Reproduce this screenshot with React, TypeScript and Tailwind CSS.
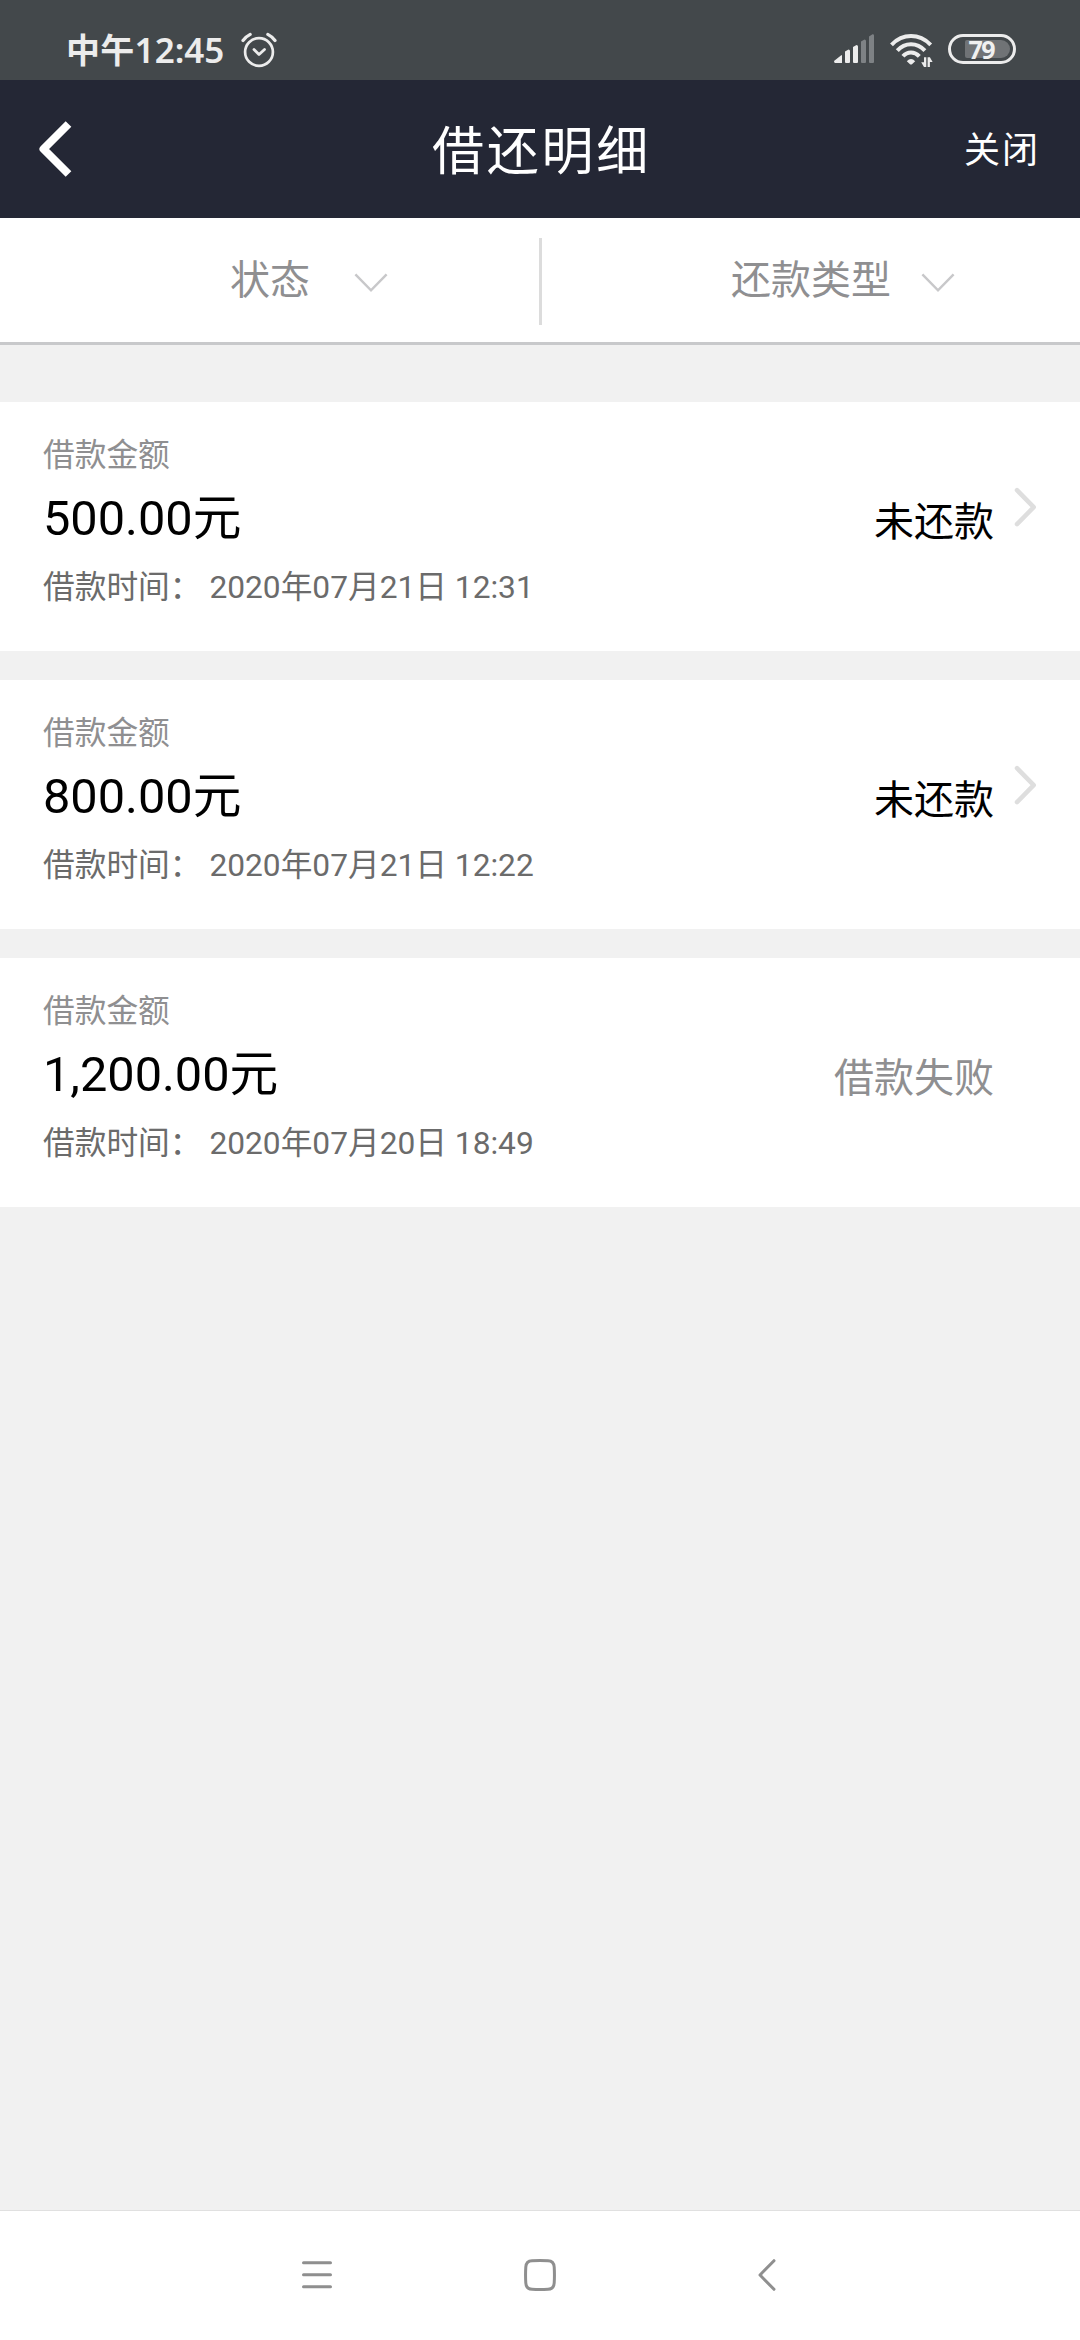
type Loan = {
  amount: string;
  time: string;
  status: string;
  open: boolean;
};

const loans: Loan[] = [
  { amount: "500.00元", time: "2020年07月21日 12:31", status: "未还款", open: true },
  { amount: "800.00元", time: "2020年07月21日 12:22", status: "未还款", open: true },
  { amount: "1,200.00元", time: "2020年07月20日 18:49", status: "借款失败", open: false },
];

function AlarmIcon() {
  return (
    <svg className="ml-[17px] mt-[32px]" width="36" height="36" viewBox="0 0 36 36" fill="none" stroke="#ececec">
      <circle cx="18" cy="20" r="13.9" strokeWidth="2.700" />
      <path d="M13 17.500l5 5 5.500-5" strokeWidth="2.800" strokeLinecap="round" strokeLinejoin="round" />
      <path d="M2 8.500Q5 4.500 9.200 2.400M34 8.500Q31 4.500 26.800 2.400" strokeWidth="3.200" strokeLinecap="round" />
    </svg>
  );
}

function SignalIcon() {
  return (
    <svg width="40" height="29" viewBox="0 0 40 29">
      <path fill="#ececec" d="M0 27l7.200-5.800h.8V29H1.200Q0 29 0 27zM11 17.500l3.500-2Q16 15.500 16 17v11q0 1-1 1h-3q-1 0-1-1zM19 13l3.500-2Q24 11 24 12.500V28q0 1-1 1h-3q-1 0-1-1z" />
      <path fill="#7e8285" d="M27 7.500l3.500-2Q32 5.500 32 7v21q0 1-1 1h-3q-1 0-1-1zM35 2.500l3.500-2.300Q40 0 40 1.500V28q0 1-1 1h-3q-1 0-1-1z" />
    </svg>
  );
}

function WifiIcon() {
  return (
    <svg className="ml-[16px]" width="43" height="34" viewBox="0 0 43 34">
      <g fill="none" stroke="#ececec" strokeWidth="4">
        <path d="M1.500 10.800Q10 2.100 21 2.100T40.700 10.800" />
        <path d="M7.300 16.700Q13 10.300 21 10.300T34.900 16.700" />
        <path d="M13 22.300Q16.200 18.400 21 18.400T29.300 22.300" />
      </g>
      <path fill="#ececec" d="M16.800 27.200Q21 23 25.200 27.200L22 30.200Q21 31 20 30.200z" />
      <path fill="#ececec" d="M34 23.200h2.300V33H34l-2.800-4.800H34zM37.600 23.200h2.300l2.700 4.800h-2.700v5h-2.300z" />
    </svg>
  );
}

function Battery() {
  return (
    <div className="ml-[15px] flex h-[30px] w-[68px] items-center rounded-full border-[3px] border-[#ececec] pl-[14px]">
      <div className="flex h-[18px] w-[45px] items-center rounded-l-[2px] rounded-r-[9px] bg-[#707376] pl-[3.5px]">
        <span className="font-['Noto_Sans','Noto_Sans_CJK_SC',sans-serif] text-[25px] font-bold leading-[18px] tracking-[-1.500px] text-[#f0f0f0]">79</span>
      </div>
    </div>
  );
}

function ChevronDown() {
  return (
    <svg width="34" height="20" viewBox="0 0 34 20" fill="none" stroke="#c8c8ca" strokeWidth="2.400">
      <path d="M1.400 1.400L17 17.300 32.600 1.400" />
    </svg>
  );
}

function StatusBar() {
  return (
    <div className="flex h-20 items-start justify-between bg-[#43484b] pl-[66px] pr-16">
      <div className="flex items-start">
        <span className="mt-[24px] w-[158px] whitespace-nowrap text-[34px] leading-[50px] text-[#ececec]">
          <span className="font-['Noto_Sans_CJK_SC',sans-serif] font-bold tracking-[0.300px]">中午</span>
          <span className="font-['Noto_Sans','Noto_Sans_CJK_SC',sans-serif] text-[35px] font-semibold">12:45</span>
        </span>
        <AlarmIcon />
      </div>
      <div className="mt-[34px] flex items-start">
        <SignalIcon />
        <WifiIcon />
        <Battery />
      </div>
    </div>
  );
}

function LoanCard({ loan }: { loan: Loan }) {
  return (
    <article className="flex h-[249px] justify-between bg-white pl-[43px] pr-[43px]">
      <div className="whitespace-nowrap pt-[31px]">
        <div className="text-[31.700px] leading-[46px] text-[#8f8f91]">借款金额</div>
        <div className="mt-[8px] text-[48.700px] leading-[64px] text-black">{loan.amount}</div>
        <div className="mt-[14px] flex text-[31.700px] leading-[46px] text-[#6b6b6b]">
          <span>借款时间：</span>
          <span className="ml-[8px]">{loan.time}</span>
        </div>
      </div>
      <div className="flex items-start">
        <span className={loan.open ? "mt-[92px] text-[40px] leading-[58px] text-black" : "mt-[92px] mr-[43px] text-[40px] leading-[58px] text-[#8f8f91]"}>
          {loan.status}
        </span>
        {loan.open && (
          <svg className="ml-[20px] mt-[85px]" width="23" height="40" viewBox="0 0 23 40" fill="none" stroke="#dedede" strokeWidth="4.500" strokeLinecap="round" strokeLinejoin="round">
            <path d="M3 3.200L19.700 20.200 3 37.200" />
          </svg>
        )}
      </div>
    </article>
  );
}

export default function App() {
  return (
    <div className="flex h-[2340px] w-[1080px] flex-col bg-[#f1f1f1] font-['Roboto','Noto_Sans_CJK_SC',sans-serif]">
      <StatusBar />
      <header className="grid h-[138px] grid-cols-[1fr_auto_1fr] items-center bg-[#242735] px-[40px] text-white">
        <svg className="-ml-[2px]" width="36" height="58" viewBox="0 0 36 58" fill="none" stroke="#fff" strokeWidth="8" strokeLinejoin="round">
          <path d="M30.500 4L5.500 29l25 25" />
        </svg>
        <h1 className="pl-[3px] pt-[7px] text-[52px] leading-[80px] tracking-[2.700px]">借还明细</h1>
        <button className="justify-self-end pt-[3px] text-[36px] leading-[56px] tracking-[2px]">关闭</button>
      </header>
      <nav className="flex h-[127px] border-b-[3px] border-[#c8c9cb] bg-white text-[40px] leading-[58px] text-[#8f8f91]">
        <div className="flex w-[539px] items-start pl-[230px] pt-[34px]">
          <span>状态</span>
          <span className="ml-[44px] mt-[21px]"><ChevronDown /></span>
        </div>
        <div className="mt-[20px] h-[87px] w-[3px] bg-[#dcdcdc]" />
        <div className="flex flex-1 items-start pl-[189px] pt-[34px]">
          <span>还款类型</span>
          <span className="ml-[30px] mt-[21px]"><ChevronDown /></span>
        </div>
      </nav>
      <main className="flex flex-1 flex-col gap-[29px] pt-[57px]">
        {loans.map((loan) => (
          <LoanCard key={loan.time} loan={loan} />
        ))}
      </main>
      <footer className="flex h-[130px] items-start border-t border-[#e0e0e0] bg-white pl-[301px] pt-[48px]">
        <svg width="32" height="32" viewBox="0 0 32 32" fill="none" stroke="#8f8f8f" strokeWidth="3" strokeLinecap="round">
          <path d="M2.500 3.700h27M2.500 15.700h27M2.500 27.700h27" />
        </svg>
        <svg className="ml-[191px]" width="32" height="32" viewBox="0 0 32 32" fill="none" stroke="#8f8f8f" strokeWidth="3">
          <path d="M8 1.700Q16 1.300 24 1.700 29.800 1.900 30.200 8 30.700 16 30.200 24 29.800 30.100 24 30.300 16 30.700 8 30.300 2.200 30.100 1.800 24 1.300 16 1.800 8 2.200 1.900 8 1.700z" />
        </svg>
        <svg className="ml-[202px]" width="18" height="32" viewBox="0 0 18 32" fill="none" stroke="#8f8f8f" strokeWidth="3" strokeLinecap="round" strokeLinejoin="round">
          <path d="M16 1.700L2 16l14 14.300" />
        </svg>
      </footer>
    </div>
  );
}
